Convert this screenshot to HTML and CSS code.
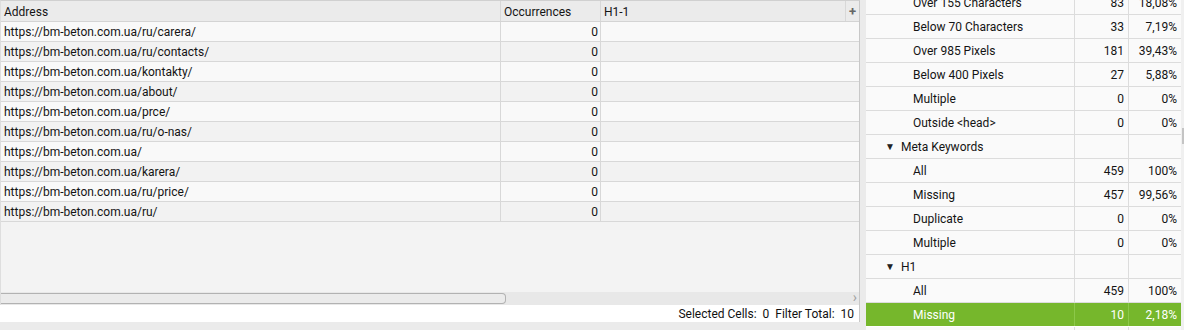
FILE: index.html
```html
<!DOCTYPE html>
<html>
<head>
<meta charset="utf-8">
<link rel="stylesheet" href="styles.css">
</head>
<body>
<div class="app">
  <section class="left">
    <div class="grid">
      <div class="hrow">
        <div class="c c-addr">Address</div>
        <div class="c c-occ">Occurrences</div>
        <div class="c c-h1">H1-1</div>
        <div class="c c-plus">+</div>
      </div>
      <div class="row odd"><div class="c c-addr">https://bm-beton.com.ua/ru/carera/</div><div class="c c-occ num">0</div><div class="c c-h1"></div></div>
      <div class="row even"><div class="c c-addr">https://bm-beton.com.ua/ru/contacts/</div><div class="c c-occ num">0</div><div class="c c-h1"></div></div>
      <div class="row odd"><div class="c c-addr">https://bm-beton.com.ua/kontakty/</div><div class="c c-occ num">0</div><div class="c c-h1"></div></div>
      <div class="row even"><div class="c c-addr">https://bm-beton.com.ua/about/</div><div class="c c-occ num">0</div><div class="c c-h1"></div></div>
      <div class="row odd"><div class="c c-addr">https://bm-beton.com.ua/prce/</div><div class="c c-occ num">0</div><div class="c c-h1"></div></div>
      <div class="row even"><div class="c c-addr">https://bm-beton.com.ua/ru/o-nas/</div><div class="c c-occ num">0</div><div class="c c-h1"></div></div>
      <div class="row odd"><div class="c c-addr">https://bm-beton.com.ua/</div><div class="c c-occ num">0</div><div class="c c-h1"></div></div>
      <div class="row even"><div class="c c-addr">https://bm-beton.com.ua/karera/</div><div class="c c-occ num">0</div><div class="c c-h1"></div></div>
      <div class="row odd"><div class="c c-addr">https://bm-beton.com.ua/ru/price/</div><div class="c c-occ num">0</div><div class="c c-h1"></div></div>
      <div class="row even"><div class="c c-addr">https://bm-beton.com.ua/ru/</div><div class="c c-occ num">0</div><div class="c c-h1"></div></div>
      <div class="empty"></div>
      <div class="hscroll">
        <div class="thumb"></div>
        <div class="arrow">›</div>
      </div>
    </div>
    <div class="status">Selected Cells:&nbsp; 0&nbsp; Filter Total:&nbsp; 10</div>
  </section>
  <section class="right">
    <div class="tree">
      <div class="trow"><div class="t-lab sub">Over 155 Characters</div><div class="t-n">83</div><div class="t-p">18,08%</div></div>
      <div class="trow"><div class="t-lab sub">Below 70 Characters</div><div class="t-n">33</div><div class="t-p">7,19%</div></div>
      <div class="trow"><div class="t-lab sub">Over 985 Pixels</div><div class="t-n">181</div><div class="t-p">39,43%</div></div>
      <div class="trow"><div class="t-lab sub">Below 400 Pixels</div><div class="t-n">27</div><div class="t-p">5,88%</div></div>
      <div class="trow"><div class="t-lab sub">Multiple</div><div class="t-n">0</div><div class="t-p">0%</div></div>
      <div class="trow"><div class="t-lab sub">Outside &lt;head&gt;</div><div class="t-n">0</div><div class="t-p">0%</div></div>
      <div class="trow"><div class="t-lab grp"><span class="tri">▼</span>Meta Keywords</div><div class="t-n"></div><div class="t-p"></div></div>
      <div class="trow"><div class="t-lab sub">All</div><div class="t-n">459</div><div class="t-p">100%</div></div>
      <div class="trow"><div class="t-lab sub">Missing</div><div class="t-n">457</div><div class="t-p">99,56%</div></div>
      <div class="trow"><div class="t-lab sub">Duplicate</div><div class="t-n">0</div><div class="t-p">0%</div></div>
      <div class="trow"><div class="t-lab sub">Multiple</div><div class="t-n">0</div><div class="t-p">0%</div></div>
      <div class="trow"><div class="t-lab grp"><span class="tri">▼</span>H1</div><div class="t-n"></div><div class="t-p"></div></div>
      <div class="trow"><div class="t-lab sub">All</div><div class="t-n">459</div><div class="t-p">100%</div></div>
      <div class="trow sel"><div class="t-lab sub">Missing</div><div class="t-n">10</div><div class="t-p">2,18%</div></div>
      <div class="trow"><div class="t-lab sub"></div><div class="t-n"></div><div class="t-p"></div></div>
    </div>
    <div class="vscroll"><div class="vthumb"></div></div>
  </section>
</div>
</body>
</html>
```

FILE: styles.css
```css
* { box-sizing: border-box; }
html, body {
  margin: 0;
  padding: 0;
  background: #ebebeb;
  font-family: Roboto, "Liberation Sans", sans-serif;
  font-size: 12px;
  color: #141414;
}
.app {
  display: flex;
  width: 1184px;
  height: 330px;
  overflow: hidden;
  gap: 6px;
}
.left {
  width: 860px;
  display: flex;
  flex-direction: column;
}
.grid {
  height: 305px;
  display: flex;
  flex-direction: column;
  background: #f3f3f3;
  border-top: 1px solid #d0d0d0;
  border-left: 1px solid #dedede;
  border-right: 1px solid #c8c8c8;
}
.hrow, .row {
  display: flex;
  flex: none;
}
.hrow {
  height: 21px;
  background: #ebebeb;
  border-bottom: 1px solid #d4d4d4;
}
.row {
  height: 20px;
  border-bottom: 1px solid #d8d8d8;
}
.row.odd { background: #f9f9f9; }
.row.even { background: #f2f2f2; }
.c {
  display: flex;
  align-items: center;
  padding: 1px 3px 0;
  white-space: nowrap;
  overflow: hidden;
  border-right: 1px solid #d8d8d8;
}
.c-addr { width: 500px; }
.c-occ { width: 100px; }
.c-h1 { width: 245px; }
.c-plus {
  width: 13px;
  border-right: none;
  justify-content: center;
  font-weight: bold;
  font-size: 13px;
  color: #666;
  padding: 0;
}
.row .c-h1 { border-right: none; }
.num { justify-content: flex-end; padding-right: 2px; }
.empty { flex: 1; }
.hscroll {
  height: 13px;
  flex: none;
  background: #e8e8e8;
  position: relative;
  display: flex;
  align-items: center;
}
.thumb {
  width: 505px;
  height: 11px;
  border: 1px solid #b2b2b2;
  border-left: none;
  border-radius: 0 4px 4px 0;
  background: #ebebeb;
}
.arrow {
  position: absolute;
  right: 2px;
  top: -2px;
  color: #a0a0a0;
  font-size: 14px;
  line-height: 14px;
}
.status {
  height: 17px;
  background: #ffffff;
  display: flex;
  align-items: center;
  justify-content: flex-end;
  padding-right: 5px;
  border-right: 1px solid #c8c8c8;
  color: #111;
  white-space: pre;
}
.right {
  flex: 1;
  display: flex;
  overflow: hidden;
}
.tree {
  width: 315px;
  margin-top: -9px;
  background: #fafafa;
}
.trow {
  display: flex;
  height: 24px;
  border-bottom: 1px solid #dcdcdc;
}
.trow > div {
  display: flex;
  align-items: center;
  white-space: nowrap;
}
.t-lab {
  width: 209px;
  border-right: 1px solid #dcdcdc;
}
.t-lab.sub { padding-left: 47px; }
.t-lab.grp { padding-left: 19px; }
.tri {
  font-size: 10px;
  width: 16px;
  color: #222;
}
.t-n {
  width: 54px;
  justify-content: flex-end;
  padding-right: 4px;
  border-right: 1px solid #dcdcdc;
}
.t-p {
  flex: 1;
  justify-content: flex-end;
  padding-right: 4px;
}
.trow.sel { background: #76b72c; color: #ffffff; border-bottom-color: #ffffff; }
.trow.sel > div { border-right-color: #8cc84a; }
.vscroll {
  flex: 1;
  background: #f0f0f0;
  position: relative;
}
.vthumb {
  margin-top: 128px;
  height: 16px;
  width: 2px;
  margin-left: 1px;
  background: #c4c4c4;
}
```
